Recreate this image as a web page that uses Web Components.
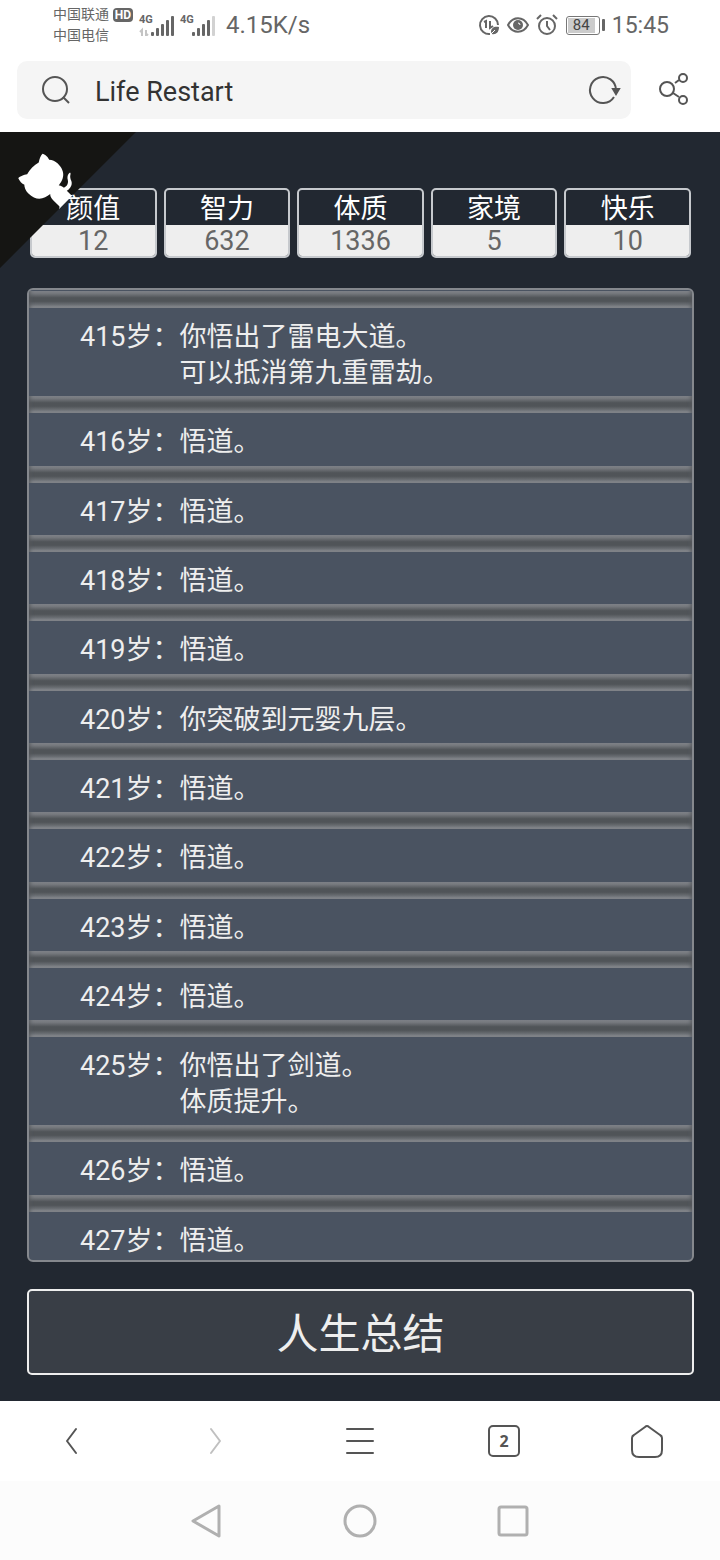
<!DOCTYPE html>
<html lang="zh-CN">
<head>
<meta charset="utf-8">
<meta name="viewport" content="width=device-width, initial-scale=1">
<title>Life Restart</title>
<style>
    html, body { height: 100%; margin: 0; }
    body {
        font-family: Roboto, "Noto Sans CJK SC", sans-serif;
        background: #222831;
    }
</style>
</head>
<body>
<life-screen>
    <stat-card name="颜值">12</stat-card>
    <stat-card name="智力">632</stat-card>
    <stat-card name="体质">1336</stat-card>
    <stat-card name="家境">5</stat-card>
    <stat-card name="快乐">10</stat-card>

    <life-entry slot="log" age="415">你悟出了雷电大道。<br>可以抵消第九重雷劫。</life-entry>
    <life-entry slot="log" age="416">悟道。</life-entry>
    <life-entry slot="log" age="417">悟道。</life-entry>
    <life-entry slot="log" age="418">悟道。</life-entry>
    <life-entry slot="log" age="419">悟道。</life-entry>
    <life-entry slot="log" age="420">你突破到元婴九层。</life-entry>
    <life-entry slot="log" age="421">悟道。</life-entry>
    <life-entry slot="log" age="422">悟道。</life-entry>
    <life-entry slot="log" age="423">悟道。</life-entry>
    <life-entry slot="log" age="424">悟道。</life-entry>
    <life-entry slot="log" age="425">你悟出了剑道。<br>体质提升。</life-entry>
    <life-entry slot="log" age="426">悟道。</life-entry>
    <life-entry slot="log" age="427">悟道。</life-entry>
</life-screen>

<script>
/** Attaches an open shadow root holding the given markup */
function render(host, html){
    host.attachShadow({mode: 'open'}).innerHTML = html;
}

/** Reset shared by the elements that hold buttons */
const buttonCss = `
    button {
        display: flex;
        align-items: center;
        justify-content: center;
        margin: 0;
        padding: 0;
        border: 0;
        background: none;
        font: inherit;
        color: inherit;
    }
    svg { display: block; fill: none; stroke: currentColor; }`;

/**
 * Signal strength of one SIM card
 *
 * ## Attributes:
 *      - _bars_: how many of the five bars are lit
 *      - _data_: present on the SIM that carries mobile data
 */
customElements.define('signal-bars', class extends HTMLElement {
    connectedCallback(){
        const lit = Number(this.getAttribute('bars'));
        const bars = [4, 8, 12, 16, 20].map((h, i) =>
            `<rect x="${12 + i * 5}" y="${22 - h}" width="3" height="${h}" rx="1" fill="${i < lit ? '#666' : '#d2d2d2'}"/>`).join('');
        const arrows = this.hasAttribute('data')
            ? '<path d="M3 22v-6l-2 2M7 16v6l2-2" fill="none" stroke="#c4c4c4" stroke-width="2"/>' : '';
        render(this, `<style>
            :host { display: block; position: relative; width: 35px; height: 22px; }
            svg { display: block; }
            span {
                position: absolute;
                left: 0;
                top: 0;
                font: bold 11px/12px Roboto, sans-serif;
            }
        </style>
        <svg width="35" height="22" viewBox="0 0 35 22">${arrows}${bars}</svg><span>4G</span>`);
    }
});

/** Status bar of the phone: carriers, signal, speed, battery, clock */
customElements.define('phone-status', class extends HTMLElement {
    connectedCallback(){
        render(this, `<style>
            :host {
                display: flex;
                justify-content: space-between;
                align-items: center;
                height: 50px;
                padding: 0 51px 0 53px;
                background: #fff;
                color: #666;
            }
            .side { display: flex; align-items: center; }
            .carriers { font-size: 14px; line-height: 21px; }
            .carriers div { display: flex; align-items: center; gap: 4px; }
            .hd {
                width: 20px;
                border-radius: 4px;
                background: #666;
                color: #fff;
                font-size: 12px;
                line-height: 14px;
                font-weight: bold;
                text-align: center;
            }
            signal-bars { margin-left: 6px; }
            .speed { margin-left: 11px; font-size: 24px; }
            .right { gap: 7px; }
            .battery { display: flex; align-items: center; gap: 2px; margin-left: 1px; }
            .level {
                box-sizing: border-box;
                width: 34px;
                height: 19px;
                padding: 1px 4px 1px 1px;
                border: 1px solid #777;
                border-radius: 3px;
            }
            .level span {
                display: block;
                background: #ccc;
                color: #444;
                font-size: 15px;
                line-height: 15px;
                text-align: center;
            }
            .tip { width: 3px; height: 12px; border-radius: 1px; background: #666; }
            .clock { font-size: 23px; }
        </style>
        <div class="side">
            <div class="carriers">
                <div>中国联通<span class="hd">HD</span></div>
                <div>中国电信</div>
            </div>
            <signal-bars bars="5" data></signal-bars>
            <signal-bars bars="4"></signal-bars>
            <span class="speed">4.15K/s</span>
        </div>
        <div class="side right">
            <svg width="22" height="22" viewBox="0 0 22 22" fill="none" stroke="#666" stroke-width="2">
                <path d="M12 20A9 9 0 1 1 20 11"/>
                <path d="M6 8l2-1v7M12 7v7l3-2"/>
                <path d="M13 18c0-4 3-6 8-5c0 5-3 8-7 7z" fill="#666" stroke="none"/>
                <path d="M11 22l6-6" stroke="#fff" stroke-width="1"/>
            </svg>
            <svg width="22" height="22" viewBox="0 0 22 22" fill="none" stroke="#666" stroke-width="2">
                <path d="M1 11C6 2 16 2 21 11C16 20 6 20 1 11z"/>
                <circle cx="11" cy="11" r="5" fill="#666" stroke="none"/>
                <path d="M11 9a2 2 0 0 1 2 2" stroke="#fff" stroke-width="1"/>
            </svg>
            <svg width="22" height="22" viewBox="0 0 22 22" fill="none" stroke="#666" stroke-width="2">
                <circle cx="11" cy="12" r="8"/>
                <path d="M11 7v5l3 4M1 5l4-4M21 5l-4-4"/>
            </svg>
            <div class="battery"><div class="level"><span>84</span></div><div class="tip"></div></div>
            <span class="clock">15:45</span>
        </div>`);
    }
});

/** Address bar with the page title, reload and share */
customElements.define('address-bar', class extends HTMLElement {
    connectedCallback(){
        render(this, `<style>
            ${buttonCss}
            :host {
                display: flex;
                align-items: center;
                box-sizing: border-box;
                height: 82px;
                padding: 0 27px 2px 17px;
                gap: 26px;
                background: #fff;
                color: #555;
            }
            label {
                flex: 1;
                min-width: 0;
                display: flex;
                align-items: center;
                height: 58px;
                padding: 0 10px 0 24px;
                border-radius: 10px;
                background: #f5f5f5;
            }
            input {
                flex: 1;
                min-width: 0;
                margin: 0 0 0 22px;
                padding: 3px 0 0;
                border: 0;
                outline: 0;
                background: none;
                font: 27px/36px Roboto, "Noto Sans CJK SC", sans-serif;
                color: #333;
            }
        </style>
        <label>
            <svg width="32" height="32" viewBox="0 0 32 32" stroke-width="2"><circle cx="14" cy="15" r="12"/><path d="M22 23l6 6"/></svg>
            <input type="text" value="Life Restart" aria-label="网址">
            <button aria-label="刷新">
                <svg width="36" height="36" viewBox="0 0 36 36" stroke-width="2">
                    <path d="M29 25A13 13 0 1 1 31 18"/>
                    <path d="M28 17h6l-3 5z" fill="currentColor"/>
                </svg>
            </button>
        </label>
        <button aria-label="分享">
            <svg width="36" height="36" viewBox="0 0 36 36" stroke-width="2">
                <circle cx="10" cy="17" r="7"/><circle cx="26" cy="6" r="4"/><circle cx="26" cy="28" r="4"/>
                <path d="M18 11l4-3M16 21l6 4"/>
            </svg>
        </button>`);
    }
});

/** Corner ribbon that links to the repository */
customElements.define('github-corner', class extends HTMLElement {
    connectedCallback(){
        render(this, `<style>
            :host { display: block; position: absolute; left: 0; top: 0; }
            svg { display: block; width: 136px; height: 136px; fill: #151513; color: #fff; transform: scale(-1, 1); }
        </style>
        <a href="https://github.com/VickScarlet/lifeRestart" aria-label="GitHub">
            <svg viewBox="0 0 250 250">
                <path d="M0,0 L115,115 L130,115 L142,142 L250,250 L250,0 Z"/>
                <path d="M128.3,109.0 C113.8,99.7 119.0,89.6 119.0,89.6 C122.0,82.7 120.5,78.6 120.5,78.6 C119.2,72.0 123.4,76.3 123.4,76.3 C127.3,80.9 125.5,87.3 125.5,87.3 C122.9,97.6 130.6,101.9 134.4,103.2" fill="currentColor"/>
                <path d="M115.0,115.0 C114.9,115.1 118.7,116.5 119.8,115.4 L133.7,101.6 C136.9,99.2 139.9,98.4 142.2,98.6 C133.8,88.0 127.5,74.4 143.8,58.0 C148.5,53.4 154.0,51.2 159.7,51.0 C160.3,49.4 163.2,43.6 171.4,40.1 C171.4,40.1 176.1,42.5 178.8,56.2 C183.1,58.6 187.2,61.8 190.9,65.4 C194.5,69.0 197.7,73.2 200.1,77.6 C213.8,80.2 216.3,84.9 216.3,84.9 C212.7,93.1 206.9,96.0 205.4,96.6 C205.1,102.4 203.0,107.8 198.3,112.5 C181.9,128.9 168.3,122.5 157.7,114.1 C157.9,116.9 156.7,120.9 152.7,124.9 L141.0,136.5 C139.8,137.7 141.6,141.9 141.8,141.8 Z" fill="currentColor"/>
            </svg>
        </a>`);
    }
});

/**
 * One property of the player
 *
 * ## Attributes:
 *      - _name_: label over the value
 */
customElements.define('stat-card', class extends HTMLElement {
    connectedCallback(){
        render(this, `<style>
            :host {
                display: block;
                flex: 1;
                border: 2px solid #c6c9cd;
                border-radius: 5px;
                overflow: hidden;
                font-size: 27px;
                text-align: center;
            }
            .name { padding-top: 3px; line-height: 32px; color: #fff; }
            .value { padding-top: 1px; line-height: 30px; background: #eee; color: #666; }
        </style>
        <div class="name">${this.getAttribute('name')}</div>
        <div class="value"><slot></slot></div>`);
    }
});

/**
 * One year in the log, with the metal bar above it
 *
 * ## Attributes:
 *      - _age_: age in years
 */
customElements.define('life-entry', class extends HTMLElement {
    connectedCallback(){
        this.setAttribute('role', 'listitem');
        render(this, `<style>
            :host { display: flex; flex-direction: column; flex: 1 0 auto; }
            .bar {
                height: 17px;
                background: linear-gradient(#85888d 0, #74777c 15%, #505458 40%, #505458 60%, #6c7075 82%, #85888d 94%, #85888d 100%);
                box-shadow: inset 4px 0 4px -3px #55595e, inset -4px 0 4px -3px #55595e;
            }
            .row { display: flex; padding: 11px 51px 5px; font-size: 27px; line-height: 36px; color: #eee; }
        </style>
        <div class="bar"></div>
        <div class="row"><span>${this.getAttribute('age')}岁：</span><div><slot></slot></div></div>`);
    }
});

/** Toolbar of the browser */
customElements.define('browser-tools', class extends HTMLElement {
    connectedCallback(){
        render(this, `<style>
            ${buttonCss}
            :host { display: flex; height: 80px; background: #fff; color: #555; }
            button { flex: 1; }
            button:disabled { color: #c0c0c0; }
            .tabs span {
                box-sizing: border-box;
                width: 32px;
                height: 32px;
                border: 2px solid #555;
                border-radius: 5px;
                font: bold 16px/28px "Noto Sans", Roboto, sans-serif;
            }
        </style>
        <button aria-label="后退"><svg width="32" height="32" viewBox="0 0 32 32" stroke-width="2" stroke-linecap="round" stroke-linejoin="round"><path d="M20 4L11 16L20 28"/></svg></button>
        <button aria-label="前进" disabled><svg width="32" height="32" viewBox="0 0 32 32" stroke-width="2" stroke-linecap="round" stroke-linejoin="round"><path d="M11 4L20 16L11 28"/></svg></button>
        <button aria-label="菜单"><svg width="32" height="32" viewBox="0 0 32 32" stroke-width="2" stroke-linecap="round"><path d="M3 4h26M3 16h26M3 28h26"/></svg></button>
        <button class="tabs" aria-label="标签页"><span>2</span></button>
        <button aria-label="主页"><svg width="34" height="34" viewBox="0 0 34 34" stroke-width="2"><path d="M14 3Q16 1 18 3L29 11Q31 12 31 14V26Q31 33 24 33H8Q1 33 1 26V14Q1 12 3 11Z"/></svg></button>`);
    }
});

/** Navigation keys of the phone */
customElements.define('system-nav', class extends HTMLElement {
    connectedCallback(){
        render(this, `<style>
            ${buttonCss}
            :host { display: flex; height: 79px; padding: 0 18%; background: #fcfcfc; color: #b0b0b0; }
            button { flex: 1; }
        </style>
        <button aria-label="返回"><svg width="36" height="36" viewBox="0 0 36 36" stroke-width="3" stroke-linejoin="round"><path d="M31 3L5 18L31 33z"/></svg></button>
        <button aria-label="主屏幕"><svg width="36" height="36" viewBox="0 0 36 36" stroke-width="3"><circle cx="18" cy="18" r="15"/></svg></button>
        <button aria-label="最近任务"><svg width="36" height="36" viewBox="0 0 36 36" stroke-width="3"><rect x="3" y="4" width="28" height="28" rx="2"/></svg></button>`);
    }
});

/**
 * The whole screen. The stat cards go in the default slot, the years in
 * the slot `log`.
 */
customElements.define('life-screen', class extends HTMLElement {
    connectedCallback(){
        render(this, `<style>
            :host { display: flex; flex-direction: column; min-height: 100%; }
            main {
                position: relative;
                flex: 1;
                display: flex;
                flex-direction: column;
                padding: 56px 26px 26px 27px;
                background: #222831;
            }
            .stats { display: flex; gap: 7px; padding: 0 3px; }
            .log {
                flex: 1;
                display: flex;
                flex-direction: column;
                margin: 30px 0 27px;
                padding-top: 1px;
                border: 2px solid #85888d;
                border-radius: 6px;
                overflow: hidden;
                background: #4a5361;
            }
            /* the last year is cut off by the edge of the log */
            ::slotted(life-entry:last-child) { margin-bottom: -4px; }
            .summary {
                height: 86px;
                padding: 6px 0 0;
                border: 2px solid #eee;
                border-radius: 5px;
                background: #393e46;
                color: #eee;
                font: 42px/56px Roboto, "Noto Sans CJK SC", sans-serif;
            }
        </style>
        <phone-status></phone-status>
        <address-bar></address-bar>
        <main>
            <div class="stats"><slot></slot></div>
            <div class="log" role="list"><slot name="log"></slot></div>
            <button class="summary">人生总结</button>
            <github-corner></github-corner>
        </main>
        <browser-tools></browser-tools>
        <system-nav></system-nav>`);
    }
});
</script>
</body>
</html>
